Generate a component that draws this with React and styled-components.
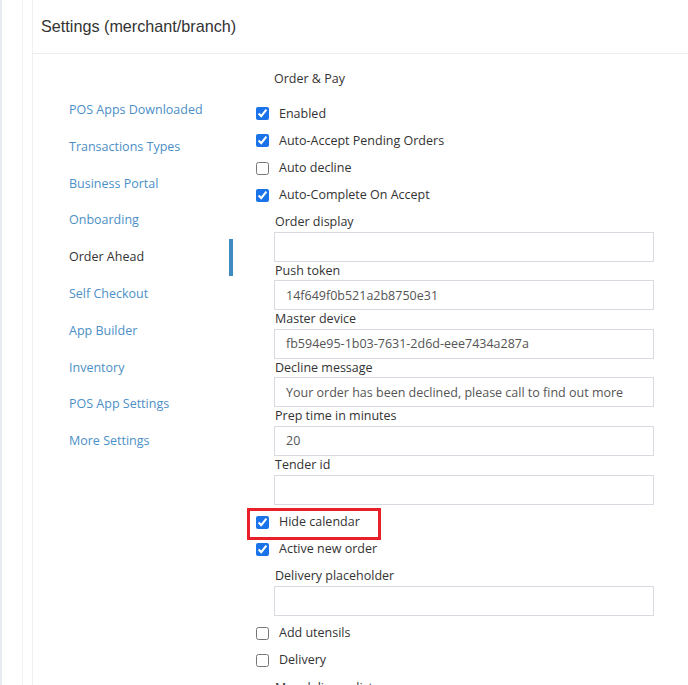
import React from "react";
import styled, { createGlobalStyle } from "styled-components";

const GlobalStyle = createGlobalStyle`
  html, body { margin: 0; padding: 0; background: #ffffff; }
  body { font-family: "Open Sans", "Noto Sans", sans-serif; color: #333; }
  *, *::before, *::after { box-sizing: border-box; }
`;

const Shell = styled.div`
  display: flex;
  min-height: 685px;
`;

const Rail = styled.div`
  width: 23px;
  flex: none;
  border-left: 2px solid #e8ecf2;
  border-right: 1px solid #f1f1f1;
`;

const Gap = styled.div`
  width: 9px;
  flex: none;
`;

const Card = styled.div`
  flex: 1;
  border-left: 1px solid #f0f0f0;
  display: flex;
  flex-direction: column;
`;

const Header = styled.div`
  flex: none;
  height: 54px;
  border-bottom: 1px solid #ececec;
  padding-left: 8px;
  display: flex;
  align-items: center;
`;

const Title = styled.h1`
  margin: 0;
  font-family: "Liberation Sans", Arial, sans-serif;
  font-weight: 400;
  font-size: 16.2px;
  color: #333;
`;

const Body = styled.div`
  display: flex;
  align-items: flex-start;
`;

const Sidebar = styled.nav`
  width: 200px;
  flex: none;
  padding-top: 38px;
  display: flex;
  flex-direction: column;
`;

const NavItem = styled.a`
  display: block;
  padding: 9px 0 9px 36px;
  line-height: 18.8px;
  font-size: 12.5px;
  text-decoration: none;
  color: ${(p) => (p.$active ? "#333" : "#4c8fc6")};
  border-right: 4px solid ${(p) => (p.$active ? "#3d8bc0" : "transparent")};
`;

const Content = styled.div`
  flex: 1;
  padding: 16px 34px 0 23px;
`;

const SectionTitle = styled.div`
  margin: 0 0 16px 18px;
  font-size: 12.5px;
  line-height: 18.6px;
  color: #333;
`;

const CheckRow = styled.label`
  position: relative;
  display: flex;
  align-items: center;
  gap: 10px;
  margin: 8.5px 0;
  font-size: 12.5px;
  line-height: 18.6px;
  color: #333;
  ${(p) =>
    p.$highlight &&
    `
    &::after {
      content: "";
      position: absolute;
      left: -9px;
      top: -5px;
      width: 134px;
      height: 32px;
      border: 3px solid #e8202a;
      pointer-events: none;
    }
  `}
`;

const Box = styled.input`
  width: 13px;
  height: 13px;
  margin: 0;
  accent-color: #1a73e8;
  flex: none;
`;

const Field = styled.div`
  margin-left: 18px;
  display: flex;
  flex-direction: column;
`;

const FieldLabel = styled.label`
  font-size: 12.5px;
  line-height: 18.6px;
  color: #333;
  padding-left: 1px;
`;

const TextInput = styled.input`
  height: 30px;
  width: 100%;
  border: 1px solid #d9d9e2;
  border-radius: 0;
  padding: 0 11px;
  font-family: "Open Sans", "Noto Sans", sans-serif;
  font-size: 12.5px;
  color: #555;
  background: #fff;
  outline: none;
`;

const navItems = [
  "POS Apps Downloaded",
  "Transactions Types",
  "Business Portal",
  "Onboarding",
  "Order Ahead",
  "Self Checkout",
  "App Builder",
  "Inventory",
  "POS App Settings",
  "More Settings",
];

const Check = ({ label, checked, highlight }) => (
  <CheckRow $highlight={highlight}>
    <Box type="checkbox" defaultChecked={checked} />
    <span>{label}</span>
  </CheckRow>
);

const TextField = ({ label, value }) => (
  <Field>
    <FieldLabel>{label}</FieldLabel>
    <TextInput type="text" defaultValue={value} />
  </Field>
);

export default function App() {
  return (
    <>
      <GlobalStyle />
      <Shell>
        <Rail />
        <Gap />
        <Card>
          <Header>
            <Title>Settings (merchant/branch)</Title>
          </Header>
          <Body>
            <Sidebar>
              {navItems.map((n) => (
                <NavItem key={n} $active={n === "Order Ahead"}>
                  {n}
                </NavItem>
              ))}
            </Sidebar>
            <Content>
              <SectionTitle>Order &amp; Pay</SectionTitle>
              <Check label="Enabled" checked />
              <Check label="Auto-Accept Pending Orders" checked />
              <Check label="Auto decline" />
              <Check label="Auto-Complete On Accept" checked />
              <TextField label="Order display" value="" />
              <TextField label="Push token" value="14f649f0b521a2b8750e31" />
              <TextField label="Master device" value="fb594e95-1b03-7631-2d6d-eee7434a287a" />
              <TextField label="Decline message" value="Your order has been declined, please call to find out more" />
              <TextField label="Prep time in minutes" value="20" />
              <TextField label="Tender id" value="" />
              <Check label="Hide calendar" checked highlight />
              <Check label="Active new order" checked />
              <TextField label="Delivery placeholder" value="" />
              <Check label="Add utensils" />
              <Check label="Delivery" />
              <TextField label="Max delivery distance" value="" />
            </Content>
          </Body>
        </Card>
      </Shell>
    </>
  );
}
